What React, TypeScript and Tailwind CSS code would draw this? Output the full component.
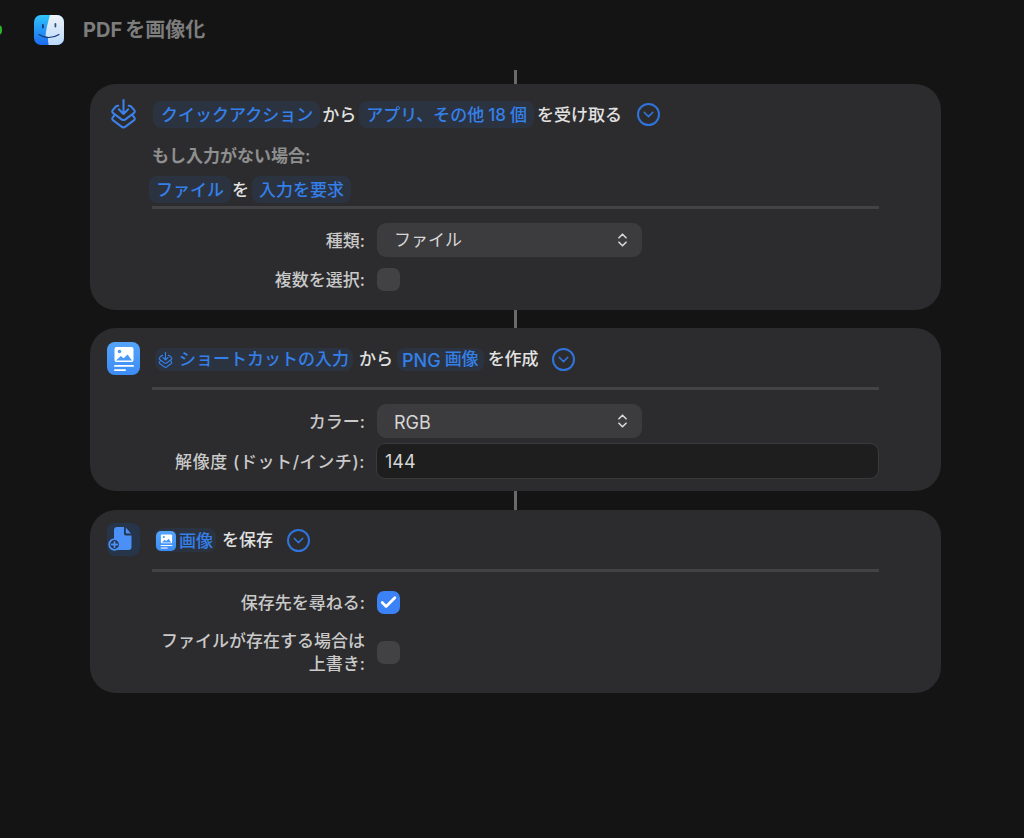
import { ChevronDown, Check } from "lucide-react";
import type { ReactNode } from "react";

const font = "font-['Inter','Noto_Sans_CJK_JP',sans-serif]";

function InputIcon({ className }: { className: string }) {
  return (
    <svg viewBox="0 0 26 30" fill="none" stroke="currentColor" strokeWidth="2" strokeLinecap="round" strokeLinejoin="round" className={className}>
      <path d="M13 1.500v13.500M8.500 10.500 13 15l4.500-4.500" />
      <path d="M8 7h-.5c-.8 0-1.300.3-1.800.8L2.800 11c-1 1.100-.8 2.400.3 3.200l8 5.900c1.200.8 2.600.8 3.800 0l8-5.900c1.100-.8 1.300-2.100.3-3.200l-2.900-3.200c-.5-.5-1-.8-1.800-.8H18" />
      <path d="M4.600 15.800 2.800 18c-1 1.100-.8 2.400.3 3.200l8 6c1.200.8 2.600.8 3.800 0l8-6c1.100-.8 1.300-2.100.3-3.200l-1.800-2.200" />
    </svg>
  );
}

function ImageDoc({ box, className }: { box: string; className: string }) {
  return (
    <div className={`flex items-center justify-center bg-gradient-to-b from-[#55a4fa] to-[#3c8cf5] ${box}`}>
      <svg viewBox="0 0 22 24" className={className}>
        <rect x="1.500" y="0" width="19" height="15" rx="2" fill="#fff" />
        <circle cx="6.500" cy="4.500" r="1.800" fill="#4a9bf8" />
        <path d="M3 13.500l4.800-4.500 2.800 2.200 4-3.800 4.400 6.100z" fill="#4a9bf8" />
        <rect x="1" y="18" width="20" height="1.800" rx="0.900" fill="#fff" />
        <rect x="1" y="22.200" width="12" height="1.800" rx="0.900" fill="#fff" />
      </svg>
    </div>
  );
}

function SaveIcon() {
  return (
    <div className="h-[33px] w-[33px] rounded-[8px] bg-[#26354a]">
      <svg viewBox="0 0 33 33" className="h-[33px] w-[33px]">
        <path d="M10 4h7v6.500c0 1.200.9 2 2 2h5.500V24a3 3 0 0 1-3 3H10a3 3 0 0 1-3-3V7a3 3 0 0 1 3-3z" fill="#4a90f6" />
        <path d="M18.800 4.600l5.200 6h-4.400c-.5 0-.8-.3-.8-.8z" fill="#4a90f6" />
        <circle cx="7.500" cy="21.500" r="5.300" fill="#26354a" stroke="#4a90f6" strokeWidth="1.800" />
        <path d="M7.500 18.800v5.400M4.800 21.500h5.400" stroke="#4a90f6" strokeWidth="1.800" strokeLinecap="round" />
      </svg>
    </div>
  );
}

function FinderIcon() {
  return (
    <svg viewBox="0 0 30 30" className="h-[30px] w-[30px]">
      <defs>
        <linearGradient id="finderLeft" x1="0" y1="0" x2="0" y2="1">
          <stop offset="0" stopColor="#2fc4fb" />
          <stop offset="1" stopColor="#1c6bf0" />
        </linearGradient>
        <linearGradient id="finderRight" x1="0" y1="0" x2="0" y2="1">
          <stop offset="0" stopColor="#eef3f8" />
          <stop offset="1" stopColor="#bcd9fb" />
        </linearGradient>
        <clipPath id="finderClip">
          <rect width="30" height="30" rx="7" />
        </clipPath>
      </defs>
      <g clipPath="url(#finderClip)">
        <rect width="30" height="30" fill="url(#finderLeft)" />
        <path d="M16 0h14v30H14.600c-.4-2.500-.7-5-.7-7.500h-2.400c0-6 2-14 4.500-22.500z" fill="url(#finderRight)" />
      </g>
      <rect x="8" y="9" width="1.800" height="4.500" rx="0.900" fill="#123a78" />
      <rect x="20.500" y="8" width="1.800" height="4.500" rx="0.900" fill="#30527f" />
      <path d="M5 19.500c5.500 4 14 4 20 0" fill="none" stroke="#123a78" strokeWidth="1.100" strokeLinecap="round" />
    </svg>
  );
}

function Token({ children, className = "" }: { children: ReactNode; className?: string }) {
  return (
    <span className={`flex items-center rounded-[8px] bg-[#2c3340] pt-[2px] whitespace-nowrap text-[#3480ea] ${className}`}>
      {children}
    </span>
  );
}

function Expand() {
  return (
    <span className="flex h-[23px] w-[23px] items-center justify-center rounded-full border-2 border-[#2f74dc] text-[#2f74dc]">
      <ChevronDown className="h-[17px] w-[17px]" strokeWidth={2} />
    </span>
  );
}

function Stepper() {
  return (
    <svg viewBox="0 0 12 18" fill="none" stroke="#d8d8d8" strokeWidth="1.800" strokeLinecap="round" strokeLinejoin="round" className="h-[16px] w-[11px]">
      <path d="M2 6.500 6 2.500l4 4M2 11.500l4 4 4-4" />
    </svg>
  );
}

function Field({ label, children, className = "" }: { label: ReactNode; children: ReactNode; className?: string }) {
  return (
    <div className={`flex items-center gap-[12px] ${className}`}>
      <div className="w-[213px] pt-[2px] text-right text-[17px] leading-[23px] font-medium whitespace-nowrap text-[#c9c9c9]">{label}</div>
      {children}
    </div>
  );
}

function Select({ value, size }: { value: string; size: string }) {
  return (
    <div className={`flex h-[34px] w-[265px] items-center justify-between rounded-[9px] bg-[#3c3c3e] pr-[14px] pl-[17px] text-[#d6d6d6] ${size}`}>
      <span className="pt-[2px]">{value}</span>
      <Stepper />
    </div>
  );
}

function Card({ icon, height, children }: { icon: ReactNode; height: string; children: ReactNode }) {
  return (
    <section className={`ml-[90px] flex w-[851px] rounded-[26px] bg-[#2c2c2e] pr-[62px] ${height}`}>
      <div className="w-[62px] shrink-0 pl-[17px]">{icon}</div>
      <div className="min-w-0 flex-1">{children}</div>
    </section>
  );
}

const Connector = ({ height }: { height: string }) => <div className={`ml-[514px] w-[3px] bg-[#6a6a6c] ${height}`} />;
const Divider = () => <div className="h-[3px] bg-[#434345]" />;

export default function App() {
  return (
    <div className={`h-[838px] w-[1024px] overflow-hidden bg-[#141414] ${font}`}>
      <header className="relative flex h-[70px] items-start pt-[15px] pl-[34px]">
        <div className="absolute top-[25px] left-[-6px] h-[10px] w-[8px] rounded-full bg-[#2bb52b]" />
        <FinderIcon />
        <h1 className="mt-[3px] ml-[19px] text-[20px] leading-[24px] font-bold text-[#7d7d7d]">
          <span className="mr-[3px]">PDF</span>を画像化
        </h1>
      </header>
      <Connector height="h-[14px]" />

      <Card
        height="h-[226px]"
        icon={<div className="pt-[14px] pl-[3px]"><InputIcon className="h-[32px] w-[27px] text-[#3c80ea]" /></div>}
      >
        <div className="mt-[17px] flex h-[27px] items-center gap-[2px] text-[17px] font-medium whitespace-nowrap text-[#e2e2e2]">
          <Token className="ml-[1px] h-[27px] pr-[7px] pl-[8px]">クイックアクション</Token>
          <span className="pt-[2px]">から</span>
          <Token className="ml-[1px] h-[27px] px-[7px]">
            アプリ、その他<span className="mx-[4px]">18</span>個
          </Token>
          <span className="ml-[1px] pt-[2px]">を受け取る</span>
          <span className="ml-[13px]"><Expand /></span>
        </div>
        <div className="mt-[18px] text-[17px] leading-[20px] font-semibold text-[#8f8f8f]">もし入力がない場合:</div>
        <div className="mt-[10px] ml-[-3px] flex h-[27px] items-center gap-[1px] text-[17px] font-medium text-[#e2e2e2]">
          <Token className="h-[27px] px-[7px]">ファイル</Token>
          <span className="pt-[2px]">を</span>
          <Token className="ml-[2px] h-[27px] px-[7px]">入力を要求</Token>
        </div>
        <div className="mt-[3px]"><Divider /></div>
        <Field label="種類:" className="mt-[14px]"><Select value="ファイル" size="text-[17px]" /></Field>
        <Field label="複数を選択:" className="mt-[10px]"><div className="h-[23px] w-[23px] rounded-[7px] bg-[#424244]" /></Field>
      </Card>

      <Connector height="h-[18px]" />

      <Card
        height="h-[163px]"
        icon={<div className="pt-[14px]"><ImageDoc box="h-[33px] w-[33px] rounded-[8px]" className="h-[24px] w-[22px]" /></div>}
      >
        <div className="mt-[19px] flex h-[24px] items-center gap-[4px] text-[17px] font-medium whitespace-nowrap text-[#e2e2e2]">
          <Token className="ml-[3px] h-[23px] gap-[6px] pr-[4px] pl-[3px]">
            <InputIcon className="h-[18px] w-[15px]" />
            <span>ショートカットの入力</span>
          </Token>
          <span className="ml-[2px] pt-[2px]">から</span>
          <Token className="h-[23px] px-[5px]">
            <span className="mr-[4px] text-[18px]">PNG</span>画像
          </Token>
          <span className="pt-[2px]">を作成</span>
          <span className="ml-[9px]"><Expand /></span>
        </div>
        <div className="mt-[16px]"><Divider /></div>
        <Field label="カラー:" className="mt-[14px]"><Select value="RGB" size="text-[18px]" /></Field>
        <Field label={<span className="tracking-[0.6px]">解像度 (ドット/インチ):</span>} className="mt-[5px]">
          <div className="ml-[-1px] flex h-[36px] flex-1 items-center rounded-[9px] border border-[#3a3a3c] bg-[#1e1e1e] pl-[8px] text-[18px] text-[#d6d6d6]">144</div>
        </Field>
      </Card>

      <Connector height="h-[19px]" />

      <Card
        height="h-[183px]"
        icon={<div className="pt-[13px]"><SaveIcon /></div>}
      >
        <div className="mt-[18px] flex h-[24px] items-center gap-[6px] text-[17px] font-medium whitespace-nowrap text-[#e2e2e2]">
          <Token className="ml-[3px] h-[24px] gap-[3px] pt-0 pr-[3px] pl-[1px]">
            <ImageDoc box="h-[20px] w-[20px] rounded-[5px]" className="h-[15px] w-[13px]" />
            <span className="pt-[2px]">画像</span>
          </Token>
          <span className="pt-[2px]">を保存</span>
          <span className="ml-[8px]"><Expand /></span>
        </div>
        <div className="mt-[17px]"><Divider /></div>
        <Field label="保存先を尋ねる:" className="mt-[18px]">
          <div className="flex h-[23px] w-[23px] items-center justify-center rounded-[7px] bg-[#3b82f6] text-white">
            <Check className="h-[19px] w-[19px]" strokeWidth={3.4} />
          </div>
        </Field>
        <Field
          label={<>ファイルが存在する場合は<br />上書き:</>}
          className="mt-[13px]"
        >
          <div className="h-[23px] w-[23px] rounded-[7px] bg-[#424244]" />
        </Field>
      </Card>
    </div>
  );
}
